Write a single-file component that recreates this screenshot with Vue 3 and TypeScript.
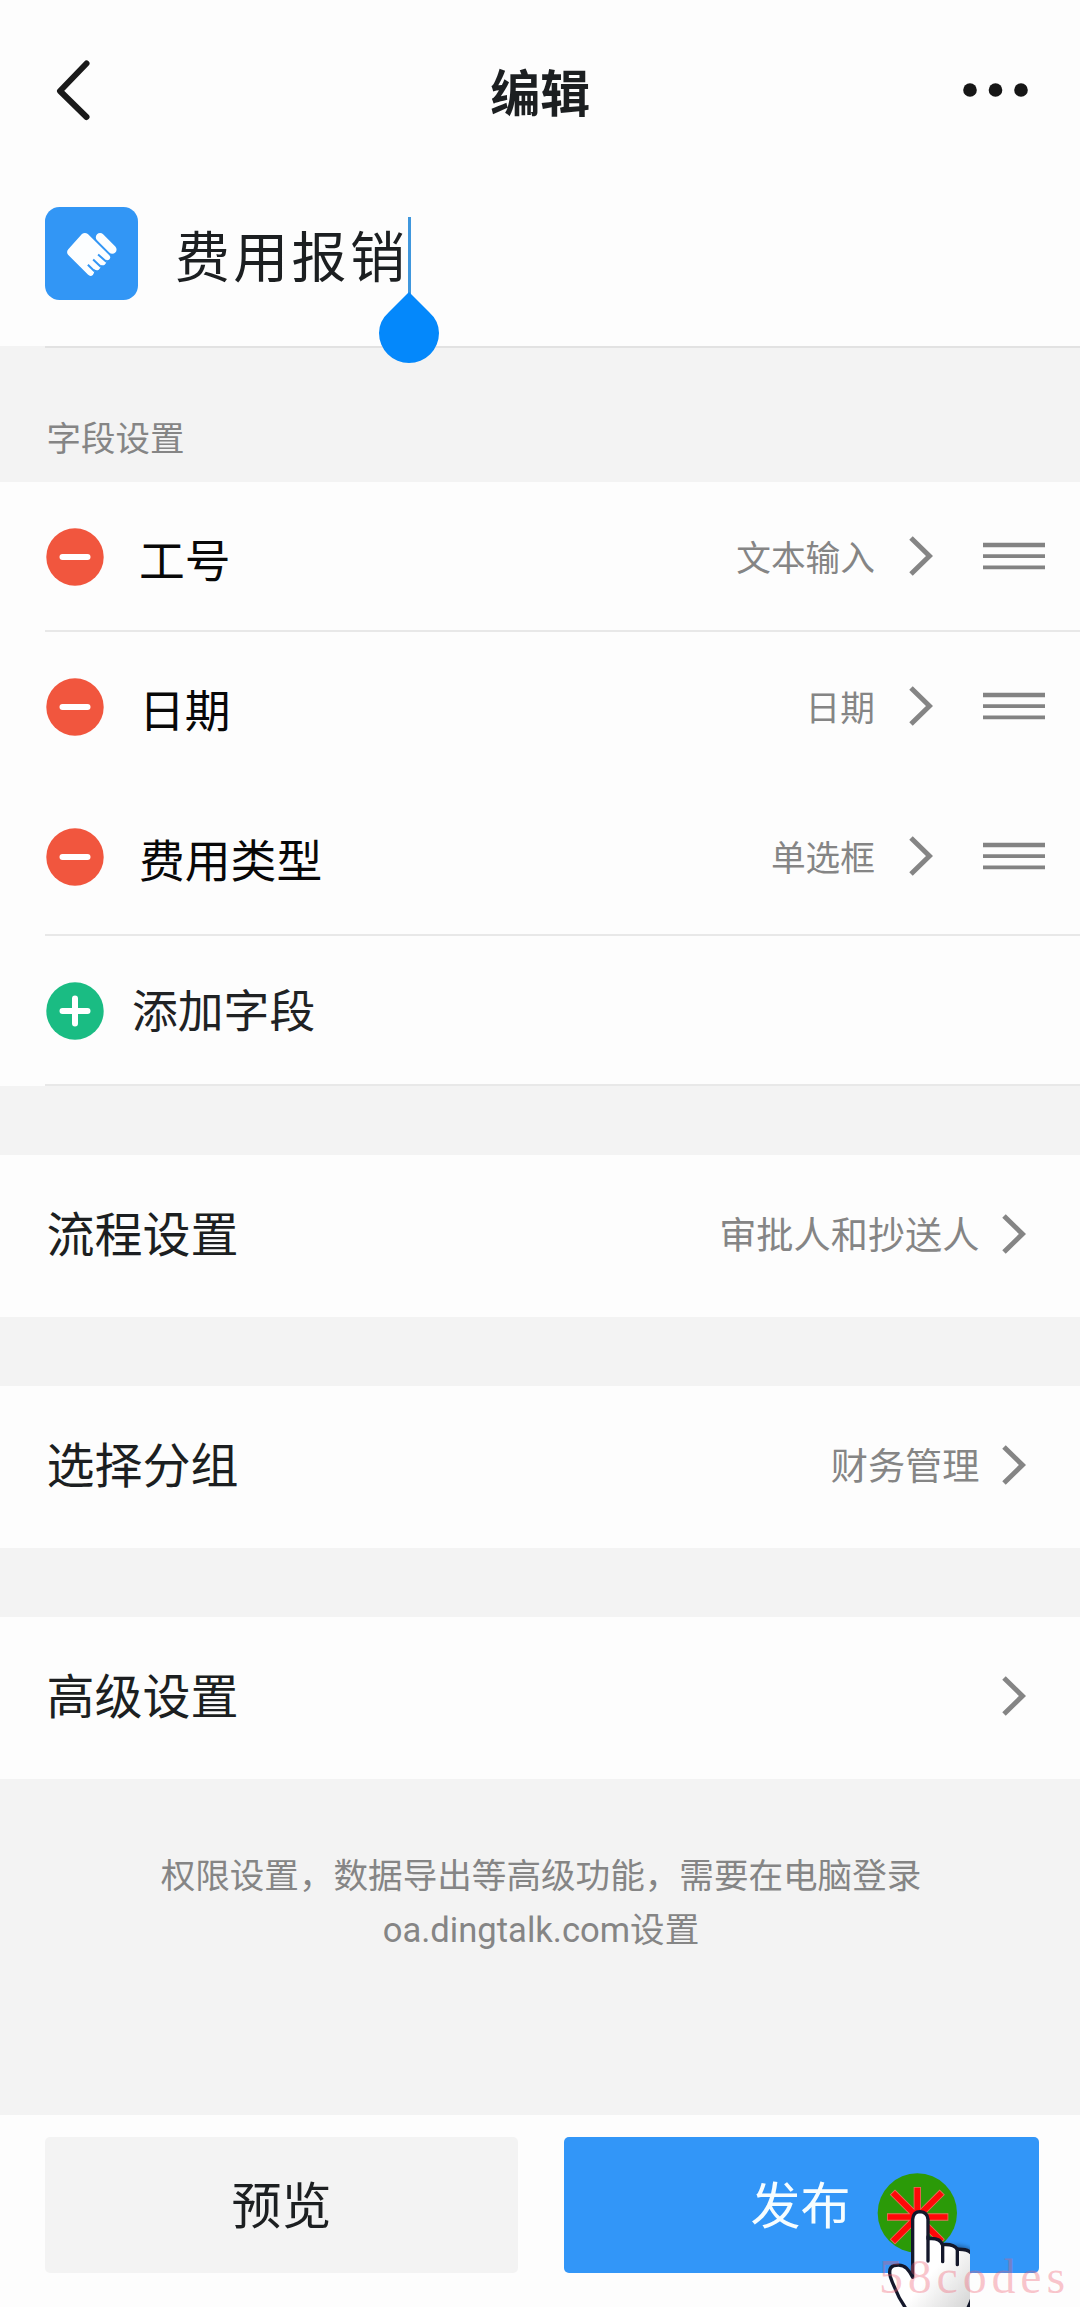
<script setup lang="ts">
interface Field {
  name: string
  kind: string
  divider: boolean
}

interface Setting {
  name: string
  value: string
}

const fields: Field[] = [
  { name: '工号', kind: '文本输入', divider: true },
  { name: '日期', kind: '日期', divider: false },
  { name: '费用类型', kind: '单选框', divider: true },
]

const settings: Setting[] = [
  { name: '流程设置', value: '审批人和抄送人' },
  { name: '选择分组', value: '财务管理' },
  { name: '高级设置', value: '' },
]
</script>

<template>
  <div class="page">
    <header class="header">
      <svg class="back" width="40" height="64" viewBox="0 0 40 64">
        <path d="M33.5 6.5 L7 34 L33.5 60" />
      </svg>
      <h1 class="title">编辑</h1>
      <svg class="more" width="70" height="20" viewBox="0 0 70 20">
        <circle cx="10" cy="10" r="6.8" />
        <circle cx="35.5" cy="10" r="6.8" />
        <circle cx="61" cy="10" r="6.8" />
      </svg>
    </header>

    <section class="form-name">
      <svg class="form-icon" width="93" height="93" viewBox="0 0 282 282">
        <rect width="282" height="282" rx="44" fill="#3296f5" />
        <path
          d="M112 82 Q121 75 130 82 L195 146 Q201 153 195 159 Q190 163 185 160 Q188 170 181 175 Q175 179 168 175 Q170 186 163 190 Q156 194 149 188 Q151 199 145 206 Q138 213 130 205 L70 145 Q64 137 70 129 Z"
          fill="#fcfeff"
        />
        <path class="thumb" d="M167 92 L204 129" />
        <path class="finger-gap" d="M130 175 L150 195 M146 159 L169 181 M161 144 L186 166" />
      </svg>
      <div class="form-title">
        费用报销
        <span class="caret"></span>
        <svg class="handle" width="62" height="74" viewBox="0 0 62 74">
          <path d="M31 1 L51 21 Q61 30 61 42 A30 30 0 0 1 1 42 Q1 30 11 21 Z" />
        </svg>
      </div>
    </section>

    <div class="group-label">字段设置</div>

    <section class="fields">
      <div v-for="f in fields" :key="f.name" class="field" :class="{ divided: f.divider }">
        <svg class="dot" width="58" height="58" viewBox="0 0 58 58">
          <circle cx="29" cy="29" r="28.7" fill="#f1563e" />
          <path d="M16.5 29 H41.5" />
        </svg>
        <span class="field-name">{{ f.name }}</span>
        <span class="field-kind">{{ f.kind }}</span>
        <svg class="chevron" width="24" height="42" viewBox="0 0 24 42">
          <path d="M2 3 L20.5 21 L2 39" />
        </svg>
        <svg class="drag" width="62" height="32" viewBox="0 0 62 32">
          <path d="M0 5 H62" stroke-width="4.6" />
          <path d="M0 16.2 H62" stroke-width="3.8" />
          <path d="M0 27.3 H62" stroke-width="3.8" />
        </svg>
      </div>
      <div class="field add">
        <svg class="dot" width="58" height="58" viewBox="0 0 58 58">
          <circle cx="29" cy="29" r="28.7" fill="#1abc83" />
          <path d="M16.5 29 H41.5 M29 16.5 V41.5" />
        </svg>
        <span class="field-name">添加字段</span>
      </div>
    </section>

    <section v-for="s in settings" :key="s.name" class="setting">
      <span class="setting-name">{{ s.name }}</span>
      <span class="setting-value">{{ s.value }}</span>
      <svg class="chevron" width="24" height="42" viewBox="0 0 24 42">
        <path d="M2 3 L20.5 21 L2 39" />
      </svg>
    </section>

    <p class="hint">权限设置，数据导出等高级功能，需要在电脑登录<br /><span class="host">oa.dingtalk.com</span>设置</p>

    <footer class="footer">
      <button class="btn">预览</button>
      <button class="btn primary">发布</button>
    </footer>

    <svg class="pointer" width="110" height="147" viewBox="0 0 330 441">
      <defs>
        <linearGradient id="glove" x1="0" y1="0" x2="1" y2="1">
          <stop offset="0.55" stop-color="#ffffff" />
          <stop offset="1" stop-color="#cfcfcf" />
        </linearGradient>
        <filter id="soft" x="-20%" y="-20%" width="140%" height="140%">
          <feGaussianBlur stdDeviation="6" />
        </filter>
      </defs>
      <circle cx="172" cy="159" r="119" fill="#2b9a08" />
      <g fill="none" stroke-linecap="square">
        <path
          d="M172 92 V171 M92 171 H254 M105 104 L172 171 L239 104 M105 238 L172 171 L239 238"
          stroke="#e5705a"
          stroke-width="22"
        />
        <path
          d="M172 92 V171 M92 171 H254 M105 104 L172 171 L239 104 M105 238 L172 171 L239 238"
          stroke="#ff0808"
          stroke-width="17"
        />
      </g>
      <path
        d="M250 255 Q350 250 354 300 V380 L335 460 H150 L105 370"
        fill="#000"
        opacity="0.35"
        filter="url(#soft)"
      />
      <path
        d="M158 352 V178 Q160 155 180 155 Q202 156 204 178 V236 Q240 232 247 254 Q282 251 292 268 Q334 266 341 292 V385 Q340 412 325 441 V460 H146 L133 438 Q116 414 106 387 Q96 366 91 350 Q84 322 102 317 Q126 311 140 325 Q150 335 158 352 Z"
        fill="url(#glove)"
        stroke="#14182b"
        stroke-width="10"
        stroke-linejoin="round"
      />
      <path
        d="M204 230 V303 M248 252 V305 M292 266 V314"
        fill="none"
        stroke="#14182b"
        stroke-width="10"
        stroke-linecap="round"
      />
    </svg>
    <div class="watermark">58codes</div>
  </div>
</template>

<style>
body {
  margin: 0;
  background: #f3f3f3;
}
</style>

<style scoped>
.page {
  position: relative;
  display: flex;
  flex-direction: column;
  width: 1080px;
  height: 2307px;
  overflow: hidden;
  background: #f3f3f3;
  color: #1c1f21;
  font-family: 'Noto Sans CJK SC', sans-serif;
}

.header {
  display: flex;
  align-items: center;
  justify-content: space-between;
  height: 180px;
  padding: 0 50.5px 0 53px;
  background: #fdfdfd;
}

.back {
  fill: none;
  stroke: #1a1a1a;
  stroke-width: 6;
  stroke-linecap: round;
  stroke-linejoin: round;
  margin: -3px 28px 0 0;
}

.title {
  margin: -1px 0 0;
  font-size: 50px;
  line-height: 60px;
  font-weight: 700;
}

.more {
  fill: #161616;
}

.form-name {
  display: flex;
  align-items: center;
  box-sizing: border-box;
  height: 166px;
  padding: 0 0 19px 45px;
  background: #fdfdfd;
}

.form-icon {
  flex: none;
}

.thumb {
  fill: none;
  stroke: #fcfeff;
  stroke-width: 26;
  stroke-linecap: round;
}

.finger-gap {
  fill: none;
  stroke: #3296f5;
  stroke-width: 6;
}

.form-title {
  position: relative;
  margin: -2px 0 0 37px;
  font-size: 55px;
  line-height: 70px;
  letter-spacing: 3.3px;
}

.caret {
  position: absolute;
  left: 233px;
  top: -1px;
  width: 3px;
  height: 80px;
  background: #3f97dd;
}

.handle {
  position: absolute;
  left: 202.5px;
  top: 73px;
  z-index: 1;
  fill: #0488fb;
}

.group-label {
  box-sizing: border-box;
  height: 136px;
  padding-left: 46.5px;
  line-height: 181px;
  font-size: 34.5px;
  color: #858585;
  background: linear-gradient(#e2e2e2, #e2e2e2) 45px 0 / 1035px 2px no-repeat;
}

.fields {
  height: 604px;
  background: #fdfdfd;
}

.field {
  display: flex;
  align-items: center;
  box-sizing: border-box;
  height: 150px;
  margin-left: 45px;
  padding: 2px 35px 0 1px;
}

.field:nth-child(2) {
  padding-bottom: 2px;
}

.field:nth-child(3) {
  height: 154px;
  padding-bottom: 4px;
}

.divided,
.add {
  border-bottom: 2px solid #e8e8e8;
}

.dot {
  flex: none;
}

.dot path {
  fill: none;
  stroke: #fff;
  stroke-width: 6;
  stroke-linecap: round;
}

.field-name {
  flex: 1;
  margin: 2px 0 0 35px;
  font-size: 45.8px;
  line-height: 60px;
  color: #080808;
}

.add .field-name {
  margin: -6px 0 0 28px;
  color: #202224;
}

.field-kind {
  margin: -2px 34px 0 0;
  font-size: 34.7px;
  line-height: 50px;
  color: #858585;
}

.chevron {
  flex: none;
  fill: none;
  stroke: #858585;
  stroke-width: 5;
  margin-top: -3px;
}

.drag {
  flex: none;
  margin: -3px 0 0 50px;
  stroke: #838383;
}

.setting {
  display: flex;
  align-items: center;
  flex: none;
  height: 162.5px;
  margin-top: 68.5px;
  padding: 0 54.5px 0 46.5px;
  background: #fdfdfd;
}

.setting-name {
  flex: 1;
  margin-top: -9px;
  font-size: 48px;
  line-height: 60px;
}

.setting-value {
  margin: -5px 22px 0 0;
  font-size: 37.2px;
  line-height: 50px;
  color: #858585;
}

.hint {
  margin: 67px 0 0 2px;
  font-size: 34.6px;
  line-height: 54px;
  text-align: center;
  color: #858585;
}

.host {
  font-family: Roboto, sans-serif;
}

.footer {
  display: flex;
  gap: 46px;
  box-sizing: border-box;
  height: 192px;
  margin-top: auto;
  padding: 22px 41px 34px 45px;
  background: #fdfdfd;
}

.btn {
  flex: 1;
  border: 0;
  border-radius: 5px;
  padding: 0 0 6px;
  background: #f3f3f3;
  color: #1c1f21;
  font: inherit;
  font-size: 50px;
  line-height: 60px;
}

.btn.primary {
  padding-right: 2px;
  background: #3296f8;
  color: #f6fdff;
}

.pointer {
  position: absolute;
  left: 860px;
  top: 2160px;
}

.watermark {
  position: absolute;
  left: 879px;
  top: 2249px;
  font-family: 'Liberation Serif', serif;
  font-size: 48px;
  line-height: 56px;
  letter-spacing: 4.8px;
  color: rgba(240, 90, 110, 0.34);
}
</style>
